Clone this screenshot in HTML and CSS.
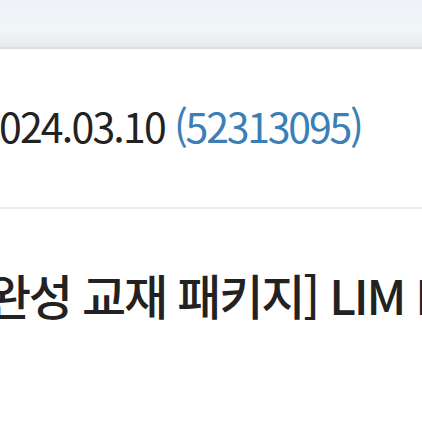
FILE: index.html
```html
<!DOCTYPE html>
<html lang="ko">
<head>
<meta charset="utf-8">
<link rel="stylesheet" href="styles.css">
</head>
<body>
<div class="topbar"></div>
<div class="order">
  <span class="date">2024.03.10</span><span class="num">(52313095)</span>
</div>
<div class="title">[완성 교재 패키지] LIM IN 영어</div>
</body>
</html>
```
FILE: styles.css
```css
html, body {
  margin: 0;
  padding: 0;
  background: #ffffff;
  width: 422px;
  height: 422px;
  overflow: hidden;
  font-family: "Noto Sans CJK KR", "Noto Sans", sans-serif;
}
.topbar {
  height: 47px;
  background: linear-gradient(#eef2f6 0%, #f1f6f9 60%, #e6e9ec 100%);
  border-bottom: 2px solid #dcdfe2;
}
.order {
  height: 152px;
  padding-bottom: 6px;
  border-bottom: 2px solid #ececec;
  display: flex;
  align-items: center;
  white-space: nowrap;
  font-size: 41px;
  line-height: 1;
  color: #222222;
  margin-left: -22px;
}
.order .date { font-weight: 400; letter-spacing: -1.8px; }
.order .num { color: #3a80b7; margin-left: 9px; letter-spacing: -2.2px; }
.title {
  white-space: nowrap;
  font-size: 48px;
  font-weight: 500;
  color: #222222;
  letter-spacing: -2.2px;
  margin-left: -28px;
  padding-top: 61px;
  line-height: 1;
}
```
